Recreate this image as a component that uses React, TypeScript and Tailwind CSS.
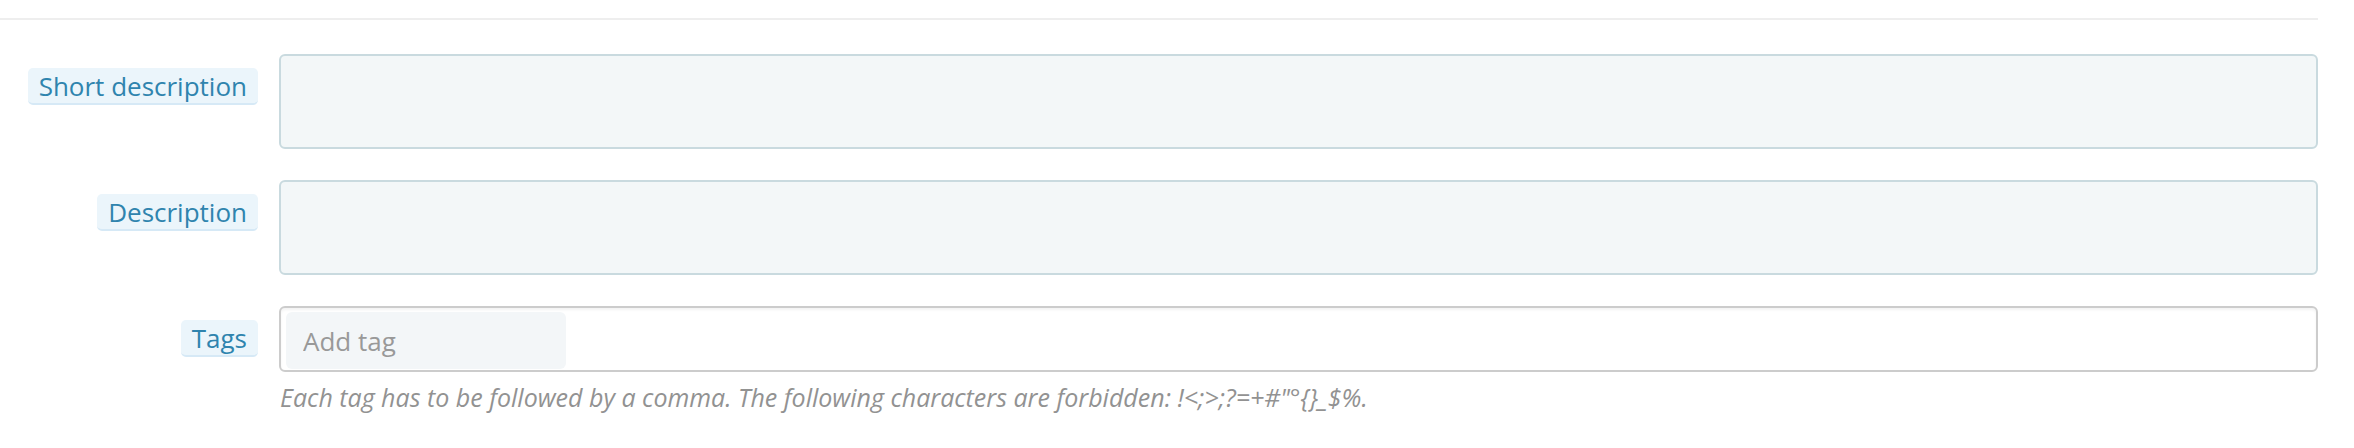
import React from "react";

function Label({ children }: { children: React.ReactNode }) {
  return (
    <div className="w-[258px] shrink-0 flex justify-end pt-[14px]">
      <span className="h-[37px] px-[11px] rounded-[5px] bg-[#ebf5fb] border-b-2 border-[#d6e9f6] text-[26px] leading-[36px] text-[#2f84ae]">
        {children}
      </span>
    </div>
  );
}

export default function App() {
  return (
    <div className="w-[2354px] h-[448px] bg-white pt-[18px] font-['Open_Sans',sans-serif]">
      <div className="mr-[36px] border-t-2 border-[#eeeeee]" />

      <div className="mr-[36px] mt-[34px] flex flex-col gap-[31px]">
        <div className="flex items-start">
          <Label>Short description</Label>
          <textarea className="ml-[21px] flex-1 h-[95px] resize-none rounded-[6px] border-2 border-[#c9dadf] bg-[#f3f7f8] outline-none" />
        </div>

        <div className="flex items-start">
          <Label>Description</Label>
          <textarea className="ml-[21px] flex-1 h-[95px] resize-none rounded-[6px] border-2 border-[#c9dadf] bg-[#f3f7f8] outline-none" />
        </div>

        <div className="flex items-start">
          <Label>Tags</Label>
          <div className="ml-[21px] flex-1 flex flex-col">
            <div className="h-[66px] rounded-[6px] border-2 border-[#cccccc] bg-white shadow-[inset_0_2px_3px_rgba(0,0,0,0.05)] pl-[5px] pt-[4px]">
              <input
                type="text"
                placeholder="Add tag"
                className="w-[280px] h-[57px] rounded-[6px] bg-[#f3f6f8] px-[17px] text-[26px] text-[#555] placeholder:text-[#999999] outline-none"
              />
            </div>
            <p className="mt-[8px] pl-[1px] text-[25px] leading-[34px] italic text-[#929292]">
              Each tag has to be followed by a comma. The following characters are forbidden: !&lt;;&gt;;?=+#"°{"{}"}_$%.
            </p>
          </div>
        </div>
      </div>
    </div>
  );
}
